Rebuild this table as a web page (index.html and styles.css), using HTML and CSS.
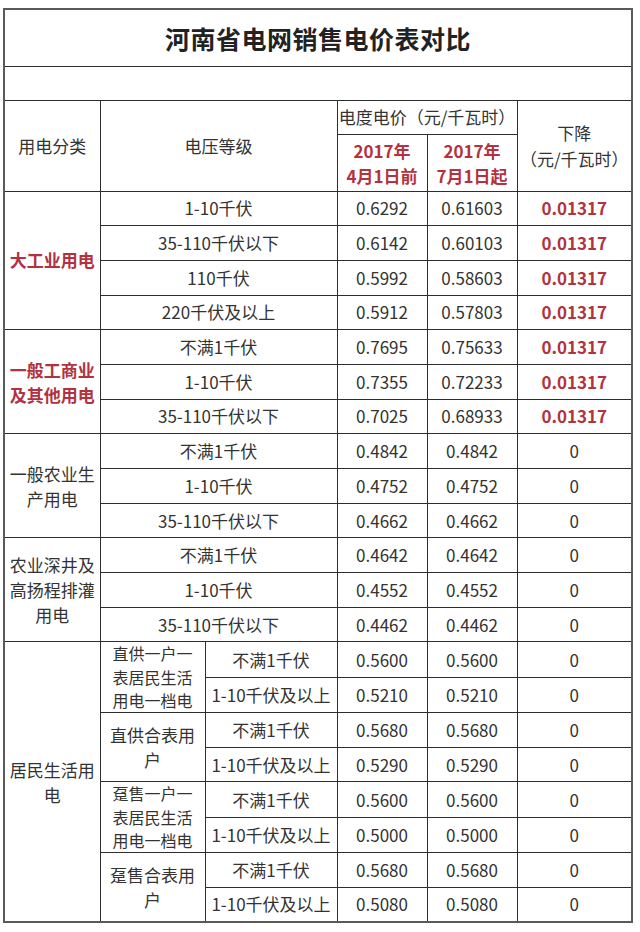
FILE: index.html
```html
<!DOCTYPE html>
<html lang="zh-CN">
<head>
<meta charset="utf-8">
<title>河南省电网销售电价表对比</title>
<link rel="stylesheet" href="styles.css">
</head>
<body>
<table class="price">
  <colgroup>
    <col class="c-cat">
    <col class="c-sub">
    <col class="c-volt">
    <col class="c-num">
    <col class="c-num">
    <col class="c-drop">
  </colgroup>
  <tr class="r-title"><td colspan="6" class="title">河南省电网销售电价表对比</td></tr>
  <tr class="r-blank"><td colspan="6"></td></tr>
  <tr class="r-head1">
    <td rowspan="2">用电分类</td>
    <td rowspan="2" colspan="2">电压等级</td>
    <td colspan="2" class="nowrap">电度电价（元/千瓦时）</td>
    <td rowspan="2" class="drop-head">下降<br>（元/千瓦时）</td>
  </tr>
  <tr class="r-head2">
    <td class="red bold lh">2017年<br>4月1日前</td>
    <td class="red bold lh">2017年<br>7月1日起</td>
  </tr>

  <tr class="row"><td rowspan="4" class="red bold">大工业用电</td><td colspan="2">1-10千伏</td><td>0.6292</td><td>0.61603</td><td class="red bold">0.01317</td></tr>
  <tr class="row"><td colspan="2">35-110千伏以下</td><td>0.6142</td><td>0.60103</td><td class="red bold">0.01317</td></tr>
  <tr class="row"><td colspan="2">110千伏</td><td>0.5992</td><td>0.58603</td><td class="red bold">0.01317</td></tr>
  <tr class="row"><td colspan="2">220千伏及以上</td><td>0.5912</td><td>0.57803</td><td class="red bold">0.01317</td></tr>

  <tr class="row"><td rowspan="3" class="red bold lh">一般工商业<br>及其他用电</td><td colspan="2">不满1千伏</td><td>0.7695</td><td>0.75633</td><td class="red bold">0.01317</td></tr>
  <tr class="row"><td colspan="2">1-10千伏</td><td>0.7355</td><td>0.72233</td><td class="red bold">0.01317</td></tr>
  <tr class="row"><td colspan="2">35-110千伏以下</td><td>0.7025</td><td>0.68933</td><td class="red bold">0.01317</td></tr>

  <tr class="row"><td rowspan="3" class="lh">一般农业生<br>产用电</td><td colspan="2">不满1千伏</td><td>0.4842</td><td>0.4842</td><td>0</td></tr>
  <tr class="row"><td colspan="2">1-10千伏</td><td>0.4752</td><td>0.4752</td><td>0</td></tr>
  <tr class="row"><td colspan="2">35-110千伏以下</td><td>0.4662</td><td>0.4662</td><td>0</td></tr>

  <tr class="row"><td rowspan="3" class="lh">农业深井及<br>高扬程排灌<br>用电</td><td colspan="2">不满1千伏</td><td>0.4642</td><td>0.4642</td><td>0</td></tr>
  <tr class="row"><td colspan="2">1-10千伏</td><td>0.4552</td><td>0.4552</td><td>0</td></tr>
  <tr class="row"><td colspan="2">35-110千伏以下</td><td>0.4462</td><td>0.4462</td><td>0</td></tr>

  <tr class="row"><td rowspan="8" class="lh">居民生活用<br>电</td><td rowspan="2" class="lh3">直供一户一<br>表居民生活<br>用电一档电</td><td>不满1千伏</td><td>0.5600</td><td>0.5600</td><td>0</td></tr>
  <tr class="row"><td class="nowrap">1-10千伏及以上</td><td>0.5210</td><td>0.5210</td><td>0</td></tr>
  <tr class="row"><td rowspan="2" class="lh">直供合表用<br>户</td><td>不满1千伏</td><td>0.5680</td><td>0.5680</td><td>0</td></tr>
  <tr class="row"><td class="nowrap">1-10千伏及以上</td><td>0.5290</td><td>0.5290</td><td>0</td></tr>
  <tr class="row"><td rowspan="2" class="lh3">趸售一户一<br>表居民生活<br>用电一档电</td><td>不满1千伏</td><td>0.5600</td><td>0.5600</td><td>0</td></tr>
  <tr class="row"><td class="nowrap">1-10千伏及以上</td><td>0.5000</td><td>0.5000</td><td>0</td></tr>
  <tr class="row"><td rowspan="2" class="lh">趸售合表用<br>户</td><td>不满1千伏</td><td>0.5680</td><td>0.5680</td><td>0</td></tr>
  <tr class="row"><td class="nowrap">1-10千伏及以上</td><td>0.5080</td><td>0.5080</td><td>0</td></tr>
</table>
</body>
</html>
```

FILE: styles.css
```css
html, body {
  margin: 0;
  padding: 0;
  background: #ffffff;
}

body {
  padding: 8px 0 0 3px;
  font-family: "Noto Sans CJK SC", "Microsoft YaHei", sans-serif;
  color: #333333;
}

.price {
  border-collapse: collapse;
  table-layout: fixed;
  width: 628px;
  border: 2px solid #5a5a5a;
}

.c-cat { width: 96px; }
.c-sub { width: 105px; }
.c-volt { width: 132px; }
.c-num { width: 90px; }
.c-drop { width: 115px; }

.price td {
  border: 1px solid #2e2e2e;
  padding: 0;
  text-align: center;
  vertical-align: middle;
  font-size: 17px;
  line-height: 20px;
  color: #333333;
}

.r-title { height: 57px; }
.r-blank { height: 34px; }
.r-head1 { height: 34px; }
.r-head2 { height: 57px; }
.row { height: 34.7px; }

.price td.title {
  font-size: 25px;
  font-weight: 700;
  color: #222222;
  letter-spacing: 0.5px;
  line-height: 30px;
}

.price td.lh { line-height: 25px; }
.price td.lh3 { font-size: 16px; line-height: 23.2px; }
.price td.drop-head { line-height: 26px; }

.nowrap { white-space: nowrap; }

.price td.red { color: #b3323f; }
.bold { font-weight: 700; }
```
